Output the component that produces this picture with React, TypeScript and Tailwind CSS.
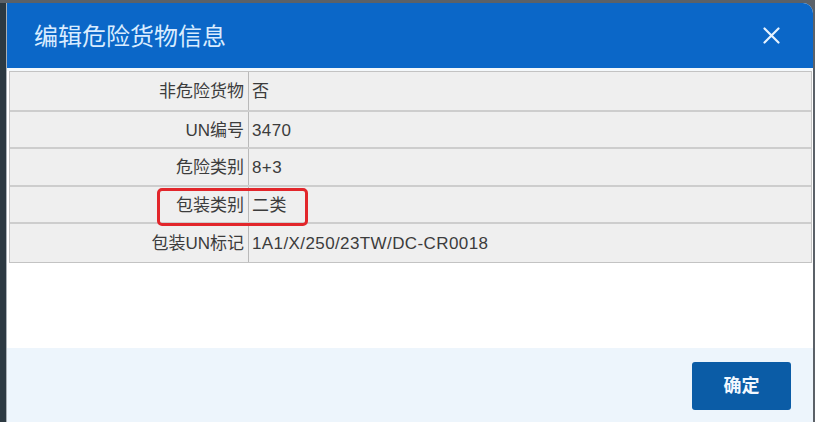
import React from "react";

const rows: { label: string; value: string; h: string }[] = [
  { label: "非危险货物", value: "否", h: "h-[40px]" },
  { label: "UN编号", value: "3470", h: "h-[37px]" },
  { label: "危险类别", value: "8+3", h: "h-[38px]" },
  { label: "包装类别", value: "二类", h: "h-[37px]" },
  { label: "包装UN标记", value: "1A1/X/250/23TW/DC-CR0018", h: "h-[38px]" },
];

export default function App() {
  return (
    <div
      className="w-[815px] h-[422px] overflow-hidden bg-[#5b6168] flex pt-[3px]"
      style={{ fontFamily: '"Liberation Sans", "Noto Sans CJK SC", sans-serif' }}
    >
      <div className="w-[6px] bg-[#2c3942]" />
      <div className="flex-1 mr-[2px] flex flex-col bg-white rounded-tr-[10px] overflow-hidden border-l border-[#a9b0b6]">
        <div className="h-[65px] shrink-0 bg-[#0b67c8] flex items-center justify-between pl-[27px] pr-[33px]">
          <span className="text-[24px] text-[#d9ecff] leading-none pt-[2px]">编辑危险货物信息</span>
          <svg width="17" height="17" viewBox="0 0 17 17">
            <path d="M1.5 1.5 L15.5 15.5 M15.5 1.5 L1.5 15.5" stroke="#e6f2ff" strokeWidth="2.2" strokeLinecap="round" />
          </svg>
        </div>
        <div className="h-[3px] bg-[#f4f8fb]" />
        <div className="relative ml-[2px] mr-[1px] border border-[#c3c3c3] bg-[#efefef]">
          {rows.map((r, i) => (
            <div
              key={r.label}
              className={`flex ${r.h} ${i < rows.length - 1 ? "border-b-2 border-[#cdcdcd]" : ""}`}
            >
              <div className="w-[239px] shrink-0 flex items-center justify-end pr-[4px] pt-[2px] border-r border-[#b9b9b9] text-[17px] text-[#3c3c3c]">
                {r.label}
              </div>
              <div className="flex-1 flex items-center pl-[3px] pt-[2px] text-[17px] tracking-[0.4px] text-[#3c3c3c]">
                {r.value}
              </div>
            </div>
          ))}
          <div className="absolute left-[147px] top-[116px] w-[151px] h-[38px] border-[3px] border-[#e2262b] rounded-[5px]" />
        </div>
        <div className="flex-1 bg-white" />
        <div className="h-[74px] shrink-0 bg-[#edf5fc] flex items-center justify-end pr-[22px] pt-[2px]">
          <button className="w-[99px] h-[48px] bg-[#0b5ca6] rounded-[3px] text-[#f2f8ff] text-[18px] font-bold flex items-center justify-center">
            确定
          </button>
        </div>
      </div>
    </div>
  );
}
